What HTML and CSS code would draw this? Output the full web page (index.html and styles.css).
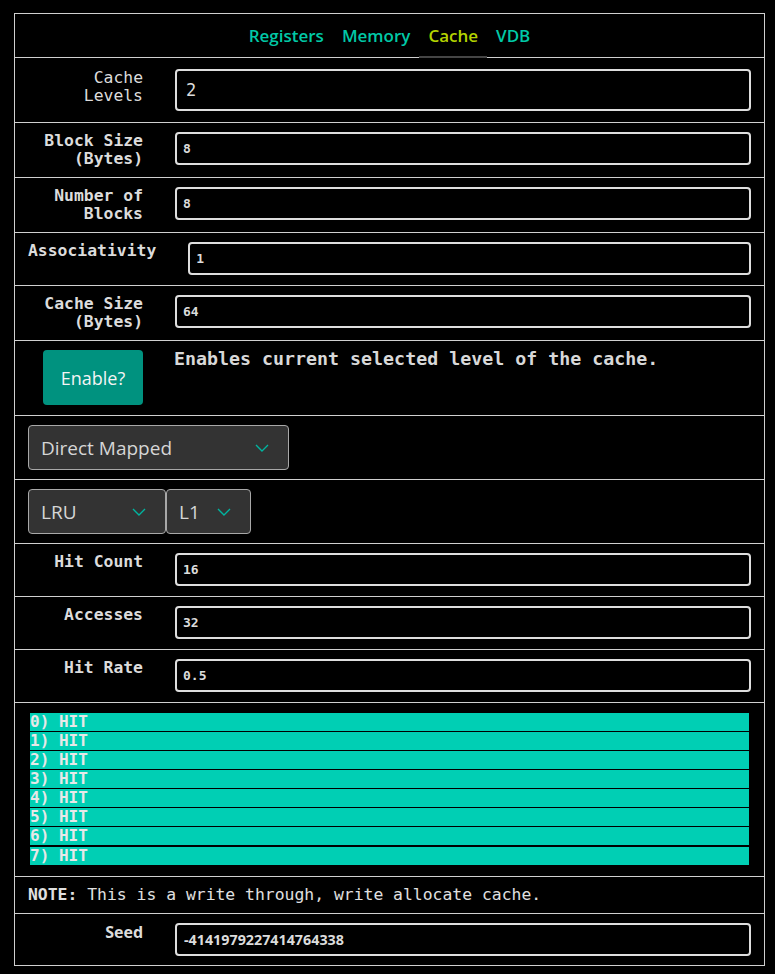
FILE: index.html
```html
<!DOCTYPE html>
<html lang="en">
<head>
<meta charset="utf-8">
<title>Cache</title>
<link rel="stylesheet" href="styles.css">
</head>
<body>
<div class="panel">
  <nav class="tabs">
    <span class="tab">Registers</span>
    <span class="tab">Memory</span>
    <span class="tab active">Cache</span>
    <span class="tab">VDB</span>
  </nav>

  <div class="row row-big">
    <div class="lbl lbl-regular">Cache Levels</div>
    <input class="field field-big" value="2" readonly>
  </div>
  <div class="row">
    <div class="lbl">Block Size (Bytes)</div>
    <input class="field" value="8" readonly>
  </div>
  <div class="row">
    <div class="lbl">Number of Blocks</div>
    <input class="field" value="8" readonly>
  </div>
  <div class="row">
    <div class="lbl">Associativity</div>
    <input class="field" value="1" readonly>
  </div>
  <div class="row">
    <div class="lbl">Cache Size (Bytes)</div>
    <input class="field" value="64" readonly>
  </div>
  <div class="row">
    <div class="lbl lbl-btn"><button class="btn">Enable?</button></div>
    <div class="desc">Enables current selected level of the cache.</div>
  </div>
  <div class="row row-select">
    <div class="select select-wide"><span>Direct Mapped</span><svg class="chev" viewBox="0 0 14 8" width="14" height="8"><polyline points="1,1 7,7 13,1"/></svg></div>
  </div>
  <div class="row row-select">
    <div class="select select-lru"><span>LRU</span><svg class="chev" viewBox="0 0 14 8" width="14" height="8"><polyline points="1,1 7,7 13,1"/></svg></div>
    <div class="select select-lvl"><span>L1</span><svg class="chev" viewBox="0 0 14 8" width="14" height="8"><polyline points="1,1 7,7 13,1"/></svg></div>
  </div>
  <div class="row">
    <div class="lbl">Hit Count</div>
    <input class="field" value="16" readonly>
  </div>
  <div class="row">
    <div class="lbl">Accesses</div>
    <input class="field" value="32" readonly>
  </div>
  <div class="row">
    <div class="lbl">Hit Rate</div>
    <input class="field" value="0.5" readonly>
  </div>
  <div class="row row-list">
    <ul class="hits">
      <li>0) HIT</li>
      <li>1) HIT</li>
      <li>2) HIT</li>
      <li>3) HIT</li>
      <li>4) HIT</li>
      <li>5) HIT</li>
      <li>6) HIT</li>
      <li>7) HIT</li>
    </ul>
  </div>
  <div class="row row-note">
    <p class="note"><b>NOTE:</b> This is a write through, write allocate cache.</p>
  </div>
  <div class="row row-last">
    <div class="lbl lbl-sans">Seed</div>
    <input class="field field-sans" value="-4141979227414764338" readonly>
  </div>
</div>
</body>
</html>
```

FILE: styles.css
```css
html, body {
  margin: 0;
  padding: 0;
  background: #000;
}

body {
  font-family: "DejaVu Sans Mono", monospace;
  color: #dcdcdc;
}

.panel {
  box-sizing: border-box;
  width: 751px;
  margin: 13px 0 0 14px;
  border: 1px solid #d0d0d0;
  background: #000;
}

.tabs {
  display: flex;
  justify-content: center;
  align-items: center;
  height: 43px;
  border-bottom: 1px solid #d0d0d0;
  font-family: "Open Sans", sans-serif;
  font-weight: 600;
  font-size: 17px;
}

.tab {
  position: relative;
  padding: 0 9px;
  color: #00c9a7;
  line-height: 43px;
}

.tab.active {
  color: #b4d400;
}

.tab.active::after {
  content: "";
  position: absolute;
  left: 0;
  right: 0;
  bottom: -1px;
  height: 2px;
  background: #454545;
}

.row {
  display: flex;
  align-items: flex-start;
  gap: 32px;
  padding: 9px 13px 9px 13px;
  border-bottom: 1px solid #d0d0d0;
}

.row-big {
  padding-top: 11px;
  padding-bottom: 11px;
}

.lbl {
  width: 115px;
  min-width: min-content;
  flex-shrink: 0;
  text-align: right;
  font-weight: bold;
  font-size: 16.4px;
  line-height: 18px;
  color: #dcdcdc;
}

.lbl-regular {
  font-weight: normal;
}

.lbl-btn {
  display: flex;
  justify-content: flex-end;
}

.lbl-sans {
  font-family: "Open Sans", sans-serif;
  font-size: 16px;
  line-height: 18px;
}

.field {
  flex: 1;
  min-width: 0;
  box-sizing: border-box;
  height: 33px;
  margin: 0 0 1px 0;
  padding: 0 6px;
  border: 2px solid #dedede;
  border-radius: 4px;
  background: #000;
  color: #dcdcdc;
  font-family: "DejaVu Sans Mono", monospace;
  font-weight: bold;
  font-size: 13px;
  outline: none;
}

.field-big {
  height: 42px;
  margin: 0;
  padding: 0 9px;
  font-weight: normal;
  font-size: 17px;
}

.field-sans {
  font-family: "Open Sans", sans-serif;
  font-weight: 700;
  font-size: 14.3px;
  padding-left: 7px;
}

.btn {
  box-sizing: border-box;
  width: 100px;
  height: 55px;
  margin: 0 0 1px 0;
  padding: 0;
  border: none;
  border-radius: 4px;
  background: #00927f;
  color: #f4f4f4;
  font-family: "Open Sans", sans-serif;
  font-size: 18px;
}

.desc {
  margin-left: -1px;
  font-weight: bold;
  font-size: 18.3px;
  line-height: 18px;
  color: #d8d8d8;
}

.row-select {
  gap: 0;
  padding-top: 9px;
  padding-bottom: 9px;
}

.select {
  box-sizing: border-box;
  height: 45px;
  display: flex;
  align-items: center;
  justify-content: space-between;
  padding: 0 19px 0 12px;
  border: 1px solid #a8a8a8;
  border-radius: 4px;
  background: #333;
  color: #d6d6d6;
  font-family: "Open Sans", sans-serif;
  font-size: 19px;
}

.select-wide { width: 261px; }
.select-lru { width: 138px; }
.select-lvl { width: 85px; }

.chev {
  fill: none;
  stroke: #00b5a0;
  stroke-width: 1.4;
}

.row-list {
  display: block;
  padding: 10px 15px 11px 15px;
}

.hits {
  list-style: none;
  margin: 0;
  padding: 0;
  display: flex;
  flex-direction: column;
  gap: 1px;
}

.hits li {
  height: 18px;
  background: #00cfb4;
  color: #e8e8e8;
  font-weight: bold;
  font-size: 16px;
  line-height: 18px;
}

.hits li:last-child {
  margin-top: 1px;
}

.row-note {
  display: block;
}

.note {
  margin: 0;
  font-size: 16.4px;
  line-height: 18px;
  color: #e0e0e0;
}

.row-last {
  border-bottom: none;
  padding-bottom: 8px;
}
```
